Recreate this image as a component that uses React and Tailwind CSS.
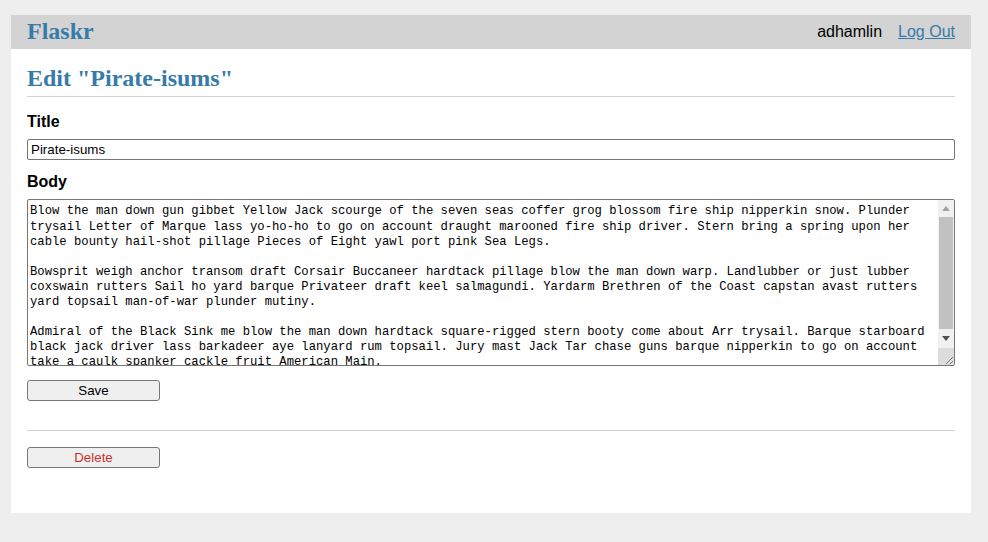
import React from "react";

const bodyLines = [
  "Blow the man down gun gibbet Yellow Jack scourge of the seven seas coffer grog blossom fire ship nipperkin snow. Plunder",
  "trysail Letter of Marque lass yo-ho-ho to go on account draught marooned fire ship driver. Stern bring a spring upon her",
  "cable bounty hail-shot pillage Pieces of Eight yawl port pink Sea Legs.",
  "",
  "Bowsprit weigh anchor transom draft Corsair Buccaneer hardtack pillage blow the man down warp. Landlubber or just lubber",
  "coxswain rutters Sail ho yard barque Privateer draft keel salmagundi. Yardarm Brethren of the Coast capstan avast rutters",
  "yard topsail man-of-war plunder mutiny.",
  "",
  "Admiral of the Black Sink me blow the man down hardtack square-rigged stern booty come about Arr trysail. Barque starboard",
  "black jack driver lass barkadeer aye lanyard rum topsail. Jury mast Jack Tar chase guns barque nipperkin to go on account",
  "take a caulk spanker cackle fruit American Main.",
];

function Scrollbar() {
  return (
    <div className="w-[16px] flex flex-col bg-[#f1f1f1] shrink-0">
      <div className="h-[17px] flex items-center justify-center">
        <svg width="8" height="5" viewBox="0 0 8 5">
          <polygon points="0,5 8,5 4,0" fill="#a3a3a3" />
        </svg>
      </div>
      <div className="h-[112px] mx-[1px] bg-[#c1c1c1]"></div>
      <div className="flex-1 flex items-center justify-center">
        <svg width="8" height="5" viewBox="0 0 8 5">
          <polygon points="0,0 8,0 4,5" fill="#505050" />
        </svg>
      </div>
      <div className="h-[17px] bg-[#dcdcdc] flex items-end justify-end">
        <svg width="10" height="10" viewBox="0 0 10 10">
          <line x1="9" y1="2" x2="2" y2="9" stroke="#7a7a7a" strokeWidth="1" />
          <line x1="9" y1="6" x2="6" y2="9" stroke="#7a7a7a" strokeWidth="1" />
        </svg>
      </div>
    </div>
  );
}

export default function App() {
  const sans = "font-['Liberation_Sans',Arial,sans-serif]";
  return (
    <div className={`min-h-screen bg-[#eeeeee] pt-[15px] pl-[11px] ${sans}`}>
      <div className="w-[960px] bg-white">
        {/* Nav */}
        <nav className="h-[34px] bg-[#d3d3d3] flex items-center px-2">
          <h1 className="flex-auto font-['Liberation_Serif','Times_New_Roman',serif] font-bold text-[24px] leading-[27.6px] text-[#377ba8] px-2">
            Flaskr
          </h1>
          <ul className="flex text-[16px] leading-[18px]">
            <li className="p-2 text-black">adhamlin</li>
            <li className="p-2">
              <a href="#" className="text-[#377ba8] underline">Log Out</a>
            </li>
          </ul>
        </nav>

        <section className="px-4 pb-4">
          {/* Header */}
          <header className="border-b border-[#d3d3d3] pt-4 pb-[3px]">
            <h1 className="font-['Liberation_Serif','Times_New_Roman',serif] font-bold text-[24px] leading-[27.6px] text-[#377ba8]">
              Edit "Pirate-isums"
            </h1>
          </header>

          {/* Edit form */}
          <form className="flex flex-col mt-4">
            <label className="font-bold text-[16px] leading-[18.4px] mb-2 text-black">Title</label>
            <input
              defaultValue="Pirate-isums"
              className="h-[21px] border border-[#767676] rounded-[2px] px-[3px] text-[13.33px] text-black mb-[13px] outline-none"
            />
            <label className="font-bold text-[16px] leading-[18.4px] mb-[8px] text-black">Body</label>
            <div className="h-[167px] border border-[#767676] rounded-[2px] flex overflow-hidden mb-[14px]">
              <div className="flex-1 overflow-hidden pt-[4px] pl-[2px] font-['Liberation_Mono','Courier_New',monospace] text-[12.22px] leading-[15.1px] text-black whitespace-pre">
                {bodyLines.map((l, i) => (
                  <div key={i} className="h-[15.1px]">{l}</div>
                ))}
              </div>
              <Scrollbar />
            </div>
            <button
              type="button"
              className="self-start w-[133px] h-[21px] bg-[#efefef] border border-[#767676] rounded-[3px] text-[13.33px] text-black mb-[13px]"
            >
              Save
            </button>
          </form>

          <hr className="border-0 border-t border-[#d3d3d3] mt-4" />

          {/* Delete form */}
          <form className="flex flex-col mt-4">
            <button
              type="button"
              className="self-start w-[133px] h-[21px] bg-[#efefef] border border-[#767676] rounded-[3px] text-[13.33px] text-[#cc2f2e] mb-[13px]"
            >
              Delete
            </button>
          </form>
          <div className="h-[16px]"></div>
        </section>
      </div>
    </div>
  );
}
